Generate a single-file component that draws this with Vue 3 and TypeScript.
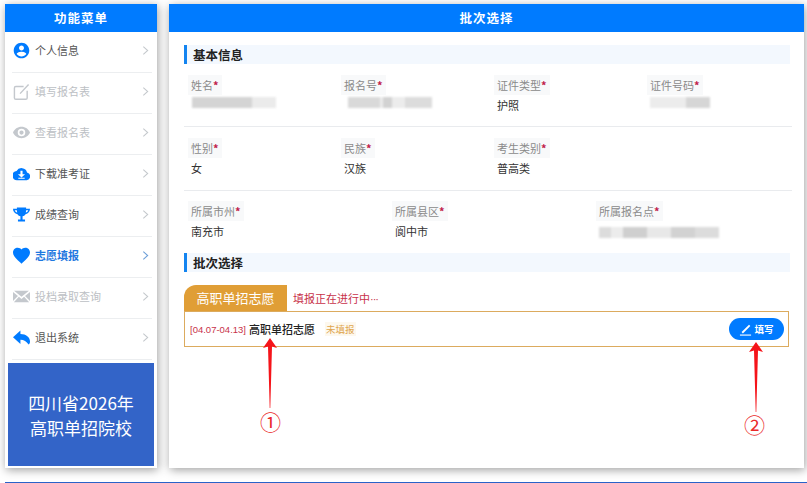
<script setup lang="ts">
interface MenuItem {
  label: string
  state: 'normal' | 'disabled' | 'active'
  icon: string
}
const menu: MenuItem[] = [
  { label: '个人信息', state: 'normal', icon: 'user' },
  { label: '填写报名表', state: 'disabled', icon: 'edit' },
  { label: '查看报名表', state: 'disabled', icon: 'eye' },
  { label: '下载准考证', state: 'normal', icon: 'cloud' },
  { label: '成绩查询', state: 'normal', icon: 'trophy' },
  { label: '志愿填报', state: 'active', icon: 'heart' },
  { label: '投档录取查询', state: 'disabled', icon: 'mail' },
  { label: '退出系统', state: 'normal', icon: 'reply' },
]
interface Field { label: string; value?: string; mask?: string }
const row1: Field[] = [
  { label: '姓名', mask: 'm-name' },
  { label: '报名号', mask: 'm-no' },
  { label: '证件类型', value: '护照' },
  { label: '证件号码', mask: 'm-id' },
]
const row2: Field[] = [
  { label: '性别', value: '女' },
  { label: '民族', value: '汉族' },
  { label: '考生类别', value: '普高类' },
]
const row3: Field[] = [
  { label: '所属市州', value: '南充市' },
  { label: '所属县区', value: '阆中市' },
  { label: '所属报名点', mask: 'm-site' },
]
</script>

<template>
  <div class="page">
    <div class="columns">
      <aside class="side">
        <div class="head">功能菜单</div>
        <ul class="menu">
          <li v-for="m in menu" :key="m.label" class="item" :class="m.state">
            <svg class="ico" viewBox="0 0 24 24">
              <path v-if="m.icon === 'user'" d="M12 1C5.900 1 1 5.900 1 12s4.900 11 11 11 11-4.900 11-11S18.100 1 12 1zm0 4c1.900 0 3.500 1.600 3.500 3.500S13.900 12 12 12s-3.500-1.600-3.500-3.500S10.100 5 12 5zm0 15.500c-2.800 0-5.200-1.400-6.700-3.500.1-2.200 4.500-3.400 6.700-3.400s6.600 1.200 6.700 3.400c-1.500 2.100-3.900 3.500-6.700 3.500z" />
              <g v-else-if="m.icon === 'edit'" class="outline">
                <path d="M15 5H4a2 2 0 0 0-2 2v14a2 2 0 0 0 2 2h14a2 2 0 0 0 2-2V11" />
                <path d="M10 15 22 2" />
              </g>
              <path v-else-if="m.icon === 'eye'" fill-rule="evenodd" d="M12 4C6.500 4 2 7.300 0 12c2 4.700 6.500 8 12 8s10-3.300 12-8c-2-4.700-6.500-8-12-8zm0 13.300A5.300 5.300 0 1 1 12 6.700a5.300 5.300 0 0 1 0 10.600zM12 9a3 3 0 1 0 0 6 3 3 0 0 0 0-6z" />
              <path v-else-if="m.icon === 'cloud'" fill-rule="evenodd" d="M19.800 10.500A8 8 0 0 0 5 8.500 6.500 6.500 0 0 0 6 21.500h13.500a5.600 5.600 0 0 0 .3-11zM10.500 8h3v5H17l-5 4.500L7 13h3.500zM7.500 18h9v1.500h-9z" />
              <path v-else-if="m.icon === 'trophy'" fill-rule="evenodd" d="M5.500 2h13v2H24c0 4-2.500 7-6.300 7.600-1 1.600-2.600 2.700-4.200 3V19H17v3H7v-3h3.500v-4.400c-1.600-.3-3.200-1.400-4.200-3C2.500 11 0 8 0 4h5.500V2zM2.500 6c.4 1.500 1.700 2.800 3.500 3.300-.3-1-.5-2.100-.5-3.300h-3zm16 0c0 1.200-.2 2.300-.5 3.300 1.800-.5 3.100-1.800 3.500-3.300h-3z" />
              <path v-else-if="m.icon === 'heart'" d="M12 23.500 10.300 22C4.300 16.500 0 12.600 0 7.800 0 3.900 3 1 6.800 1 9 1 10.900 2 12 3.600 13.100 2 15 1 17.200 1 21 1 24 3.900 24 7.800c0 4.800-4.300 8.700-10.300 14.200z" />
              <path v-else-if="m.icon === 'mail'" d="M1.500 4h21l-10.500 8.500zM0 5.500v13l7-7.200zM24 5.500v13l-7-7.200zM8.300 12.500 12 15.500l3.700-3L22.800 20H1.200z" />
              <path v-else d="M10.500 2 0 11.500l10.500 9.500v-6c5 0 8.500 2 11.500 7 1.500-1 2-2.500 2-4.500 0-6-5.500-10.500-13.500-10.500z" />
            </svg>
            <span class="label">{{ m.label }}</span>
            <svg class="chev" viewBox="0 0 8 12"><path d="M1.500 1.500 6.500 6l-5 4.500" /></svg>
          </li>
        </ul>
        <div class="banner">
          <div>四川省2026年</div>
          <div>高职单招院校</div>
        </div>
      </aside>

      <main class="main">
        <div class="head">批次选择</div>
        <div class="body">
          <div class="sec">基本信息</div>

          <div class="row four">
            <div v-for="f in row1" :key="f.label" class="field">
              <div class="fl"><span>{{ f.label }}<i>*</i></span></div>
              <div v-if="f.value" class="fv">{{ f.value }}</div>
              <div v-else class="mask" :class="f.mask"></div>
            </div>
          </div>
          <div class="row four second">
            <div v-for="f in row2" :key="f.label" class="field">
              <div class="fl"><span>{{ f.label }}<i>*</i></span></div>
              <div class="fv">{{ f.value }}</div>
            </div>
          </div>
          <div class="row three last">
            <div v-for="f in row3" :key="f.label" class="field">
              <div class="fl"><span>{{ f.label }}<i>*</i></span></div>
              <div v-if="f.value" class="fv">{{ f.value }}</div>
              <div v-else class="mask" :class="f.mask"></div>
            </div>
          </div>

          <div class="sec">批次选择</div>

          <div class="tabs">
            <div class="tab">高职单招志愿</div>
            <div class="tip">填报正在进行中<span class="dots">···</span></div>
          </div>
          <div class="batch">
            <span class="date">[04.07-04.13]</span>
            <span class="bname">高职单招志愿</span>
            <span class="badge">未填报</span>
            <button class="btn" type="button">
              <svg viewBox="0 0 14 14"><path class="pen" d="M1 13h12" /><path class="pen" d="M3.500 10.500 11.500 2.500" /></svg>
              填写
            </button>
          </div>
        </div>

        <svg class="arrow a1" viewBox="0 0 18 70">
          <path d="M9 0 16 10 11 8.500 9.300 70h-.6L7 8.500 2 10z" />
        </svg>
        <div class="num n1">①</div>
        <svg class="arrow a2" viewBox="0 0 18 70">
          <path d="M9 0 16 10 11 8.500 9.300 70h-.6L7 8.500 2 10z" />
        </svg>
        <div class="num n2">②</div>
      </main>
    </div>
    <div class="foot"></div>
  </div>
</template>

<style>
html, body { margin: 0; background: #fff; overflow: hidden; }
</style>

<style scoped>
.page {
  width: 807px;
  height: 483px;
  overflow: hidden;
  display: flex;
  flex-direction: column;
  box-sizing: border-box;
  padding-top: 4px;
  font-family: "Noto Sans CJK SC", "Noto Sans", sans-serif;
  color: #333;
}
.columns {
  display: flex;
  gap: 12px;
  padding-left: 5px;
  height: 464px;
}
.side, .main {
  background: #fff;
  box-shadow: 1px 2px 9px rgba(0, 0, 0, .38);
  display: flex;
  flex-direction: column;
}
.side { width: 152px; }
.main { width: 635px; position: relative; }
.head {
  height: 28px;
  line-height: 28px;
  background: #007bff;
  color: #fff;
  text-align: center;
  font-size: 12.500px;
  font-weight: 700;
  letter-spacing: 1px;
  flex: none;
}
.menu { list-style: none; margin: 0; padding: 0; }
.item {
  height: 41px;
  margin: 0 5px 0 7px;
  box-sizing: border-box;
  border-bottom: 1px solid #eceef0;
  display: flex;
  align-items: center;
  font-size: 11px;
  color: #555;
  padding-bottom: 4px;
}
.ico { width: 17px; height: 17px; margin-right: 5px; margin-left: 1px; fill: #007bff; stroke: none; flex: none; }
.outline { fill: none; stroke: #c4c8cd; stroke-width: 2; }
.label { flex: 1; }
.chev { width: 7px; height: 11px; fill: none; stroke: #c4c8cc; stroke-width: 1.200; margin-right: 3px; }
.disabled { color: #bcc0c4; }
.disabled .ico { fill: #c4c8cd; }
.active { color: #1f78e0; font-weight: 700; }
.active .chev { stroke: #6d9fd8; }
.banner {
  margin: 3px 3px 0;
  width: 146px;
  height: 103px;
  background: #3364c8;
  color: #fff;
  font-size: 17px;
  line-height: 25px;
  text-align: center;
  display: flex;
  flex-direction: column;
  justify-content: center;
}
.body { padding: 13px 15px 0; }
.sec {
  width: 606px;
  height: 19px;
  line-height: 19px;
  box-sizing: border-box;
  background: #f3f8fe;
  border-left: 3px solid #1384f0;
  padding-left: 6px;
  font-size: 12.500px;
  font-weight: 700;
  color: #222;
}
.row {
  display: grid;
  width: 612px;
  height: 63px;
  box-sizing: border-box;
  padding-top: 12px;
  position: relative;
}
.row::after {
  content: "";
  position: absolute;
  left: 0;
  bottom: 0;
  width: 608px;
  height: 1px;
  background: #e9ebee;
}
.second::after { bottom: -1px; }
.row.last::after { display: none; }
.four { grid-template-columns: repeat(4, 153px); }
.three { grid-template-columns: repeat(3, 204px); }
.field { padding-left: 7px; }
.fl { height: 18px; line-height: 18px; font-size: 11px; color: #8a8a8a; }
.fl span { background: #f8f9fa; padding: 2px 3px 2px 0; box-shadow: -3px 0 0 #f8f9fa; }
.fl i { color: #c0214a; font-style: normal; font-weight: 700; }
.fv { height: 22px; line-height: 22px; font-size: 11px; color: #333; }
.mask {
  height: 11px;
  margin-top: 3px;
  filter: blur(.8px);
}
.m-name { width: 84px; margin-left: 1px; background: linear-gradient(90deg, #d4d4d4 0 72%, #ebebeb 72%); }
.m-no { width: 84px; margin-left: 4px; background: linear-gradient(90deg, #d9d9d9 0 38%, #ececec 38% 42%, #d2d2d2 42% 52%, #ececec 52% 68%, #dcdcdc 68%); }
.m-id { width: 60px; background: linear-gradient(90deg, #ececec 0 60%, #d6d6d6 60%); }
.m-site { width: 120px; margin-top: 7px; background: linear-gradient(90deg, #dcdcdc 0 10%, #ececec 10% 20%, #cfcfcf 20% 40%, #e8e8e8 40% 60%, #d2d2d2 60% 80%, #dcdcdc 80%); }
.tabs { display: flex; align-items: center; margin-top: 13px; height: 26px; }
.tab {
  width: 103px;
  height: 26px;
  line-height: 26px;
  text-align: center;
  background: #e09e36;
  color: #fff;
  font-size: 13px;
  border-top-left-radius: 12px;
}
.tip { margin-left: 6px; color: #c8324a; font-size: 11px; }
.dots { font-family: "Liberation Sans", sans-serif; letter-spacing: -1px; }
.batch {
  width: 605px;
  height: 36px;
  box-sizing: border-box;
  border: 1px solid #dcab5e;
  display: flex;
  align-items: center;
  padding: 0 4px 0 5px;
}
.date { color: #c8324a; font-size: 9.500px; font-family: "Liberation Sans", sans-serif; margin-right: 3px; }
.bname { color: #222; font-size: 11px; font-weight: 500; }
.badge { margin-left: 10px; color: #e0a64e; font-size: 9.500px; background: #fdf8ee; padding: 0 1px; }
.btn {
  margin-left: auto;
  width: 55px;
  height: 22px;
  border: none;
  border-radius: 11px;
  background: #007bff;
  color: #fff;
  font-family: inherit;
  font-size: 9.500px;
  font-weight: 700;
  display: flex;
  align-items: center;
  justify-content: center;
  gap: 2px;
  padding: 0;
}
.btn svg { width: 13px; height: 13px; fill: none; stroke: #fff; }
.pen:first-child { stroke-width: 1.200; }
.pen:last-child { stroke-width: 2; }
.arrow { position: absolute; width: 18px; height: 70px; fill: #f5141a; }
.a1 { left: 92px; top: 334px; }
.a2 { left: 578px; top: 338px; }
.num { position: absolute; color: #ea2a2a; font-size: 21px; line-height: 24px; }
.n1 { left: 91px; top: 405px; }
.n2 { left: 575px; top: 408px; }
.foot { margin: 14px 0 0 5px; height: 1px; background: #2a62c8; }
</style>
